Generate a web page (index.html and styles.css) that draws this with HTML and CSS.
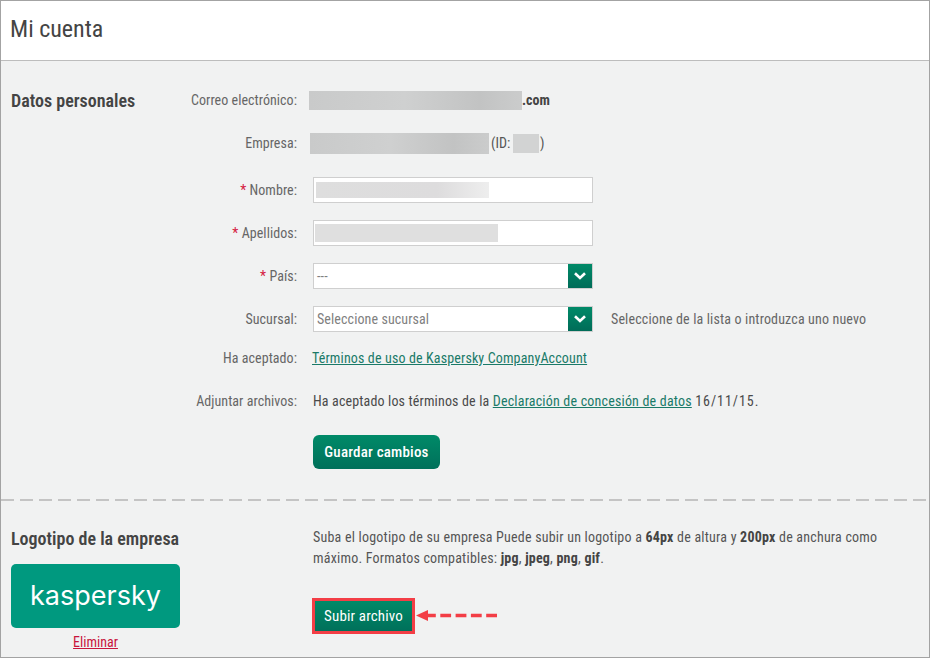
FILE: index.html
```html
<!DOCTYPE html>
<html lang="es">
<head>
<meta charset="utf-8">
<title>Mi cuenta</title>
<link rel="stylesheet" href="styles.css">
</head>
<body>
<div class="frame">
  <header class="page-head"><h1>Mi cuenta</h1></header>
  <section class="section personal">
    <h2 class="section-title">Datos personales</h2>
    <div class="form">
      <div class="row">
        <span class="label">Correo electrónico:</span>
        <span class="value strong"><span class="blur blur-email"></span>.com</span>
      </div>
      <div class="row">
        <span class="label">Empresa:</span>
        <span class="value company"><span class="blur blur-company"></span><span class="id-open">(ID:</span><span class="blur blur-id"></span>)</span>
      </div>
      <div class="row gap-big">
        <span class="label"><i class="req">*</i> Nombre:</span>
        <span class="field"><span class="blur-in blur-name"></span></span>
      </div>
      <div class="row">
        <span class="label"><i class="req">*</i> Apellidos:</span>
        <span class="field"><span class="blur-in blur-last"></span></span>
      </div>
      <div class="row">
        <span class="label"><i class="req">*</i> País:</span>
        <span class="field select"><span class="sel-text">---</span><span class="sel-btn"><svg width="14" height="10" viewBox="0 0 14 10"><path d="M2 2.2 7 7l5-4.8" fill="none" stroke="#fff" stroke-width="2.6"/></svg></span></span>
      </div>
      <div class="row">
        <span class="label">Sucursal:</span>
        <span class="field select"><span class="sel-text">Seleccione sucursal</span><span class="sel-btn"><svg width="14" height="10" viewBox="0 0 14 10"><path d="M2 2.2 7 7l5-4.8" fill="none" stroke="#fff" stroke-width="2.6"/></svg></span></span>
        <span class="hint">Seleccione de la lista o introduzca uno nuevo</span>
      </div>
      <div class="row gap-small">
        <span class="label">Ha aceptado:</span>
        <a class="link link-terms" href="#">Términos de uso de Kaspersky CompanyAccount</a>
      </div>
      <div class="row">
        <span class="label">Adjuntar archivos:</span>
        <span class="value statement">Ha aceptado los términos de la <a class="link link-data" href="#">Declaración de concesión de datos</a> <span class="date">16/11/15.</span></span>
      </div>
      <div class="actions"><button class="btn" type="button">Guardar cambios</button></div>
    </div>
  </section>
  <div class="dashes"></div>
  <section class="section logo-section">
    <div class="logo-col">
      <h2 class="section-title">Logotipo de la empresa</h2>
      <div class="logo"><span class="logo-text">kaspersky</span></div>
      <a class="remove" href="#">Eliminar</a>
    </div>
    <div class="logo-info">
      <p>Suba el logotipo de su empresa Puede subir un logotipo a <b>64px</b> de altura y <b>200px</b> de anchura como máximo. Formatos compatibles: <b>jpg</b>, <b>jpeg</b>, <b>png</b>, <b>gif</b>.</p>
      <div class="upload">
        <span class="highlight"><button class="btn btn-upload" type="button">Subir archivo</button></span>
        <svg class="arrow" width="84" height="16" viewBox="0 0 84 16"><path d="M1 7.5 13 2v11z" fill="#f33e46"/><path d="M10 7.5h72" stroke="#f33e46" stroke-width="3.4" stroke-dasharray="10.8 4.5" fill="none"/></svg>
      </div>
    </div>
  </section>
</div>
</body>
</html>
```
FILE: styles.css
```css
* { box-sizing: border-box; }
html, body { margin: 0; padding: 0; }
body {
  width: 930px;
  height: 658px;
  overflow: hidden;
  font-family: Roboto, "Liberation Sans", Arial, sans-serif;
  font-stretch: 75%;
  font-size: 14px;
  color: #555;
}
.frame {
  width: 930px;
  height: 658px;
  border: 1px solid #a3a3a3;
  background: #f1f2f2;
  overflow: hidden;
}
.page-head {
  height: 60px;
  background: #fff;
  border-bottom: 1px solid #bdbdbd;
  padding: 0 9px;
  display: flex;
  align-items: center;
}
h1 { margin: 0 0 3px; font-weight: 400; font-size: 24px; color: #444; }
.section-title { margin: 0; font-size: 18px; font-weight: 600; color: #444; line-height: 26px; white-space: nowrap; }
.section { display: flex; padding-left: 10px; }
.personal { padding-top: 26px; height: 438px; }
.form { position: relative; width: 760px; }
.personal .section-title { width: 159px; flex: none; padding-top: 1px; }
.row { display: flex; align-items: center; height: 26px; margin-bottom: 17px; }
.row.gap-big { margin-top: 21px; }
.row.gap-small { margin-top: -4px; }
.label { width: 127px; flex: none; text-align: right; color: #666; white-space: nowrap; margin-right: 16px; letter-spacing: .05px; }
.req { font-style: normal; color: #d5203f; }
.value { color: #444; display: flex; align-items: center; white-space: pre; }
.strong { font-weight: 700; }
.company { color: #555; }
.statement { display: block; color: #4a4a4a; letter-spacing: .15px; }
.link-data { letter-spacing: .19px; }
.date { letter-spacing: .95px; }
.blur { display: inline-block; background: linear-gradient(90deg, #c9caca, #cfd0d0 45%, #c2c3c3 80%, #cbcccc); }
.blur-email { width: 213px; height: 19px; margin-left: -4px; }
.blur-company { width: 179px; height: 21px; margin-left: -3px; }
.id-open { margin-left: 2px; width: 22px; }
.blur-id { width: 26px; height: 19px; margin-right: 1px; background: #d2d3d3; }
.field {
  width: 280px;
  height: 26px;
  flex: none;
  background: #fff;
  border: 1px solid #cfcfcf;
  display: flex;
  align-items: center;
}
.blur-in { display: block; }
.blur-name { width: 173px; height: 16px; margin-left: 2px; background: linear-gradient(90deg, #dedede, #dddcdd 70%, #eeeeee); }
.blur-last { width: 183px; height: 18px; margin-left: 1px; background: #dfdfdf; }
.select { justify-content: space-between; }
.sel-text { padding-left: 3px; color: #808080; letter-spacing: .1px; }
.sel-btn {
  width: 24px;
  height: 24px;
  background: linear-gradient(#008a68, #006c58);
  display: flex;
  align-items: center;
  justify-content: center;
}
.hint { margin-left: 18px; color: #666; white-space: nowrap; letter-spacing: .15px; }
.link { color: #1a7a68; text-decoration: underline; }
.link-terms { margin-left: -1px; letter-spacing: .14px; }
.actions { margin-top: 21px; }
.btn {
  font-family: inherit;
  font-stretch: inherit;
  font-size: 15px;
  font-weight: 500;
  letter-spacing: .2px;
  color: #fff;
  height: 34px;
  width: 127px;
  padding: 0;
  border: 0;
  border-radius: 6px;
  background: linear-gradient(#008a68, #00705a);
  margin-left: 143px;
}
.dashes {
  height: 2px;
  background: repeating-linear-gradient(90deg, #c4c4c4 0 13px, transparent 13px 19px);
}
.logo-section { padding-top: 25px; }
.logo-col { width: 302px; flex: none; }
.logo {
  width: 169px;
  height: 64px;
  margin: 12px 0 0;
  padding-bottom: 2px;
  background: #00997f;
  border-radius: 5px;
  display: flex;
  align-items: center;
  justify-content: center;
}
.logo-text { font-family: "Inter", sans-serif; font-stretch: normal; color: #fff; font-size: 27px; }
.remove { display: block; width: 169px; margin-top: 5px; text-align: center; color: #c8143c; line-height: 18px; }
.logo-info { width: 578px; }
.logo-info p { margin: 1px 0 0; line-height: 21px; color: #555; letter-spacing: .21px; }
.logo-info b { color: #444; }
.upload { position: relative; margin-top: 29px; margin-left: -1px; }
.highlight { display: inline-block; border: 3px solid #f33e46; width: 103px; height: 36px; }
.btn-upload { width: 97px; height: 30px; border-radius: 0; margin: 0; font-weight: 400; letter-spacing: .15px; display: block; }
.arrow { position: absolute; left: 103px; top: 10px; }
```
